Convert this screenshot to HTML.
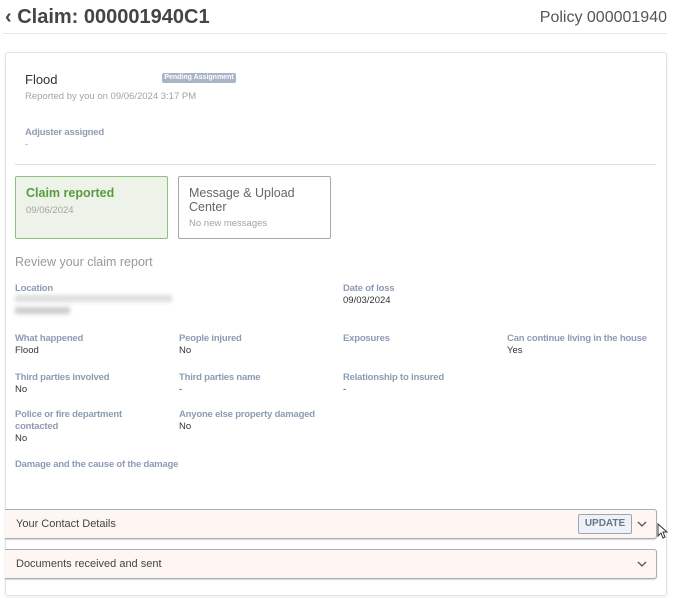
<!DOCTYPE html>
<html><head><style>
*{margin:0;padding:0;box-sizing:border-box}
body{width:673px;height:600px;background:#fff;font-family:"Liberation Sans",sans-serif;position:relative;overflow:hidden}
.a{position:absolute;white-space:nowrap}
.lb{font-size:9.5px;color:#8d9cb2;font-weight:bold;letter-spacing:-0.2px}
.v{font-size:9.5px;color:#333}
.acc{position:absolute;left:5px;width:652px;height:30px;background:#fdf6f2;border:1px solid #a9adb5;border-left:none;border-radius:0 3px 3px 0;box-shadow:0 1px 1px rgba(0,0,0,.15)}
.acc span{position:absolute;left:11px;top:8px;font-size:11px;color:#444}
</style></head><body>
<div class="a" style="left:5px;top:6px;font-size:20px;font-weight:bold;color:#454545">‹ Claim: 000001940C1</div>
<div class="a" style="right:6px;top:9px;font-size:16px;color:#555">Policy 000001940</div>
<div class="a" style="left:3px;top:33px;width:664px;height:1px;background:#e6e6e6"></div>
<div class="a" style="left:5px;top:52px;width:662px;height:544px;border:1px solid #e4e4e4;border-radius:3px;box-shadow:0 1px 2px rgba(0,0,0,.08)"></div>
<div class="a" style="left:25px;top:72px;font-size:13px;color:#333">Flood</div>
<div class="a" style="left:162px;top:73px;width:74px;height:10px;background:#a9b5c7;border-radius:2px;color:#fff;font-size:7px;font-weight:bold;text-align:center;line-height:10px">Pending Assignment</div>
<div class="a" style="left:25px;top:91px;font-size:9.5px;color:#a3a3a3">Reported by you on 09/06/2024 3:17 PM</div>
<div class="a lb" style="left:25px;top:127px">Adjuster assigned</div>
<div class="a v" style="left:25px;top:139px;color:#999">-</div>
<div class="a" style="left:15px;top:164px;width:641px;height:1px;background:#ddd"></div>
<div class="a" style="left:15px;top:176px;width:153px;height:63px;background:#eef3ea;border:1px solid #8dc07c;border-radius:2px"></div>
<div class="a" style="left:26px;top:186px;font-size:12.5px;font-weight:bold;color:#5a9a40">Claim reported</div>
<div class="a" style="left:26px;top:205px;font-size:9.5px;color:#a3a3a3">09/06/2024</div>
<div class="a" style="left:178px;top:176px;width:153px;height:63px;border:1px solid #a4a9b3;border-radius:2px"></div>
<div class="a" style="left:189px;top:186px;font-size:12.5px;color:#666;line-height:14px">Message &amp; Upload<br>Center</div>
<div class="a" style="left:189px;top:218px;font-size:9.5px;color:#a3a3a3">No new messages</div>
<div class="a" style="left:15px;top:255px;font-size:12.5px;color:#999">Review your claim report</div>
<div class="a lb" style="left:15px;top:283px">Location</div>
<div class="a" style="left:15px;top:295px;width:157px;height:7px;background:#ddd;filter:blur(2px)"></div>
<div class="a" style="left:15px;top:307px;width:55px;height:7px;background:#ccc;filter:blur(2px)"></div>
<div class="a lb" style="left:343px;top:283px">Date of loss</div>
<div class="a v" style="left:343px;top:295px">09/03/2024</div>
<div class="a lb" style="left:15px;top:333px">What happened</div><div class="a v" style="left:15px;top:345px">Flood</div>
<div class="a lb" style="left:179px;top:333px">People injured</div><div class="a v" style="left:179px;top:345px">No</div>
<div class="a lb" style="left:343px;top:333px">Exposures</div>
<div class="a lb" style="left:507px;top:333px">Can continue living in the house</div><div class="a v" style="left:507px;top:345px">Yes</div>
<div class="a lb" style="left:15px;top:372px">Third parties involved</div><div class="a v" style="left:15px;top:384px">No</div>
<div class="a lb" style="left:179px;top:372px">Third parties name</div><div class="a v" style="left:179px;top:384px">-</div>
<div class="a lb" style="left:343px;top:372px">Relationship to insured</div><div class="a v" style="left:343px;top:384px">-</div>
<div class="a lb" style="left:15px;top:409px;line-height:12px">Police or fire department<br>contacted</div><div class="a v" style="left:15px;top:433px">No</div>
<div class="a lb" style="left:179px;top:409px">Anyone else property damaged</div><div class="a v" style="left:179px;top:421px">No</div>
<div class="a lb" style="left:15px;top:459px">Damage and the cause of the damage</div>
<div class="acc" style="top:509px"><span>Your Contact Details</span>
<div class="a" style="left:573px;top:4px;width:54px;height:20px;background:#eef1f5;border:1px solid #9aa6b6;border-radius:2px;font-size:10px;color:#6a7585;text-align:center;line-height:18px;font-weight:bold">UPDATE</div>
<svg class="a" style="left:632px;top:10px" width="10" height="8"><path d="M1 2l4 4 4-4" stroke="#555" stroke-width="1.3" fill="none"/></svg></div>
<div class="acc" style="top:549px"><span>Documents received and sent</span>
<svg class="a" style="left:632px;top:10px" width="10" height="8"><path d="M1 2l4 4 4-4" stroke="#555" stroke-width="1.3" fill="none"/></svg></div>
<svg class="a" style="left:657px;top:523px" width="12" height="16"><path d="M1 1v12l3-3 2 5 2-1-2-5h4z" fill="#fff" stroke="#333" stroke-width="1"/></svg>
</body></html>
